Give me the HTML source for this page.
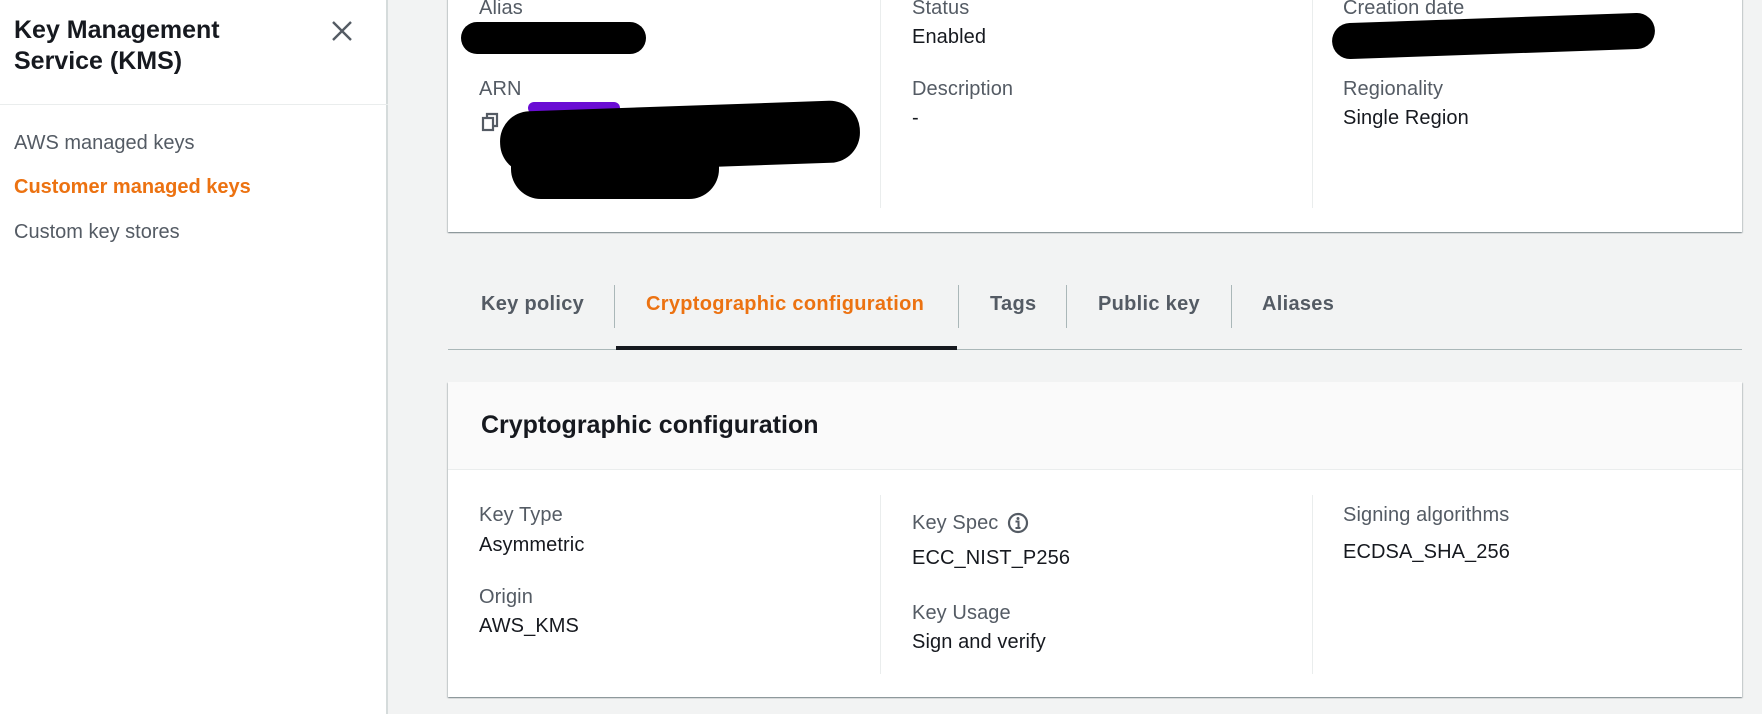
<!DOCTYPE html>
<html><head><meta charset="utf-8"><style>
*{margin:0;padding:0;box-sizing:border-box}
body{width:1762px;height:714px;overflow:hidden;background:#f2f3f3;font-family:"Liberation Sans",Arial,sans-serif;position:relative;color:#16191f}
.a{position:absolute;white-space:nowrap}
.side{position:absolute;left:0;top:0;width:388px;height:714px;background:#fff;border-right:2px solid #d5dbdb}
.lbl{color:#545b64;font-size:20px;letter-spacing:0.1px}
.val{color:#16191f;font-size:20px;letter-spacing:0.1px}
.card{position:absolute;background:#fff;box-shadow:0 1px 1px 0 rgba(0,28,36,.3),1px 1px 1px 0 rgba(0,28,36,.15),-1px 1px 1px 0 rgba(0,28,36,.15)}
.vs{position:absolute;width:1px;background:#eaeded}
.tab{position:absolute;top:293px;font-size:20px;font-weight:bold;color:#545b64;letter-spacing:0.3px}
.td{position:absolute;top:285px;width:1px;height:43px;background:#aab7b8}
.blob{position:absolute;background:#000;border-radius:30px}
</style></head><body>
<div class="side">
  <div class="a" style="left:14px;top:15px;font-size:25px;font-weight:bold;line-height:31px">Key Management<br>Service (KMS)</div>
  <svg class="a" style="left:331px;top:20px" width="22" height="22" viewBox="0 0 22 22"><path d="M2 2L20 20M20 2L2 20" stroke="#545b64" stroke-width="2.4"/></svg>
  <div class="a" style="left:0;top:104px;width:388px;height:1px;background:#eaeded"></div>
  <div class="a" style="left:14px;top:132px;font-size:20px;color:#545b64">AWS managed keys</div>
  <div class="a" style="left:14px;top:176px;font-size:20px;color:#ec7211;font-weight:bold">Customer managed keys</div>
  <div class="a" style="left:14px;top:221px;font-size:20px;color:#545b64">Custom key stores</div>
</div>

<div class="card" style="left:448px;top:-4px;width:1294px;height:236px"></div>
<div class="vs" style="left:880px;top:0;height:208px"></div>
<div class="vs" style="left:1312px;top:0;height:208px"></div>
<div class="a lbl" style="left:479px;top:-3px">Alias</div>
<div class="blob" style="left:461px;top:22px;width:185px;height:32px"></div>
<div class="a lbl" style="left:479px;top:78px">ARN</div>
<svg class="a" style="left:481px;top:112px" width="20" height="20" viewBox="0 0 20 20"><rect x="2" y="6" width="10" height="12" fill="none" stroke="#545b64" stroke-width="2.2"/><path d="M6 6V2h10v12h-4" fill="none" stroke="#545b64" stroke-width="2.2"/></svg>
<div class="a" style="left:528px;top:102px;width:92px;height:12px;background:#6a0dd4;border-radius:6px"></div>
<div class="blob" style="left:500px;top:106px;width:360px;height:62px;transform:rotate(-2deg)"></div>
<div class="blob" style="left:511px;top:135px;width:208px;height:64px"></div>
<div class="a lbl" style="left:912px;top:-3px">Status</div>
<div class="a val" style="left:912px;top:26px">Enabled</div>
<div class="a lbl" style="left:912px;top:78px">Description</div>
<div class="a val" style="left:912px;top:107px">-</div>
<div class="a lbl" style="left:1343px;top:-3px">Creation date</div>
<div class="blob" style="left:1332px;top:18px;width:323px;height:36px;transform:rotate(-2deg)"></div>
<div class="a lbl" style="left:1343px;top:78px">Regionality</div>
<div class="a val" style="left:1343px;top:107px">Single Region</div>

<div class="tab" style="left:481px">Key policy</div>
<div class="td" style="left:614px"></div>
<div class="tab" style="left:646px;color:#ec7211">Cryptographic configuration</div>
<div class="td" style="left:958px"></div>
<div class="tab" style="left:990px">Tags</div>
<div class="td" style="left:1066px"></div>
<div class="tab" style="left:1098px">Public key</div>
<div class="td" style="left:1231px"></div>
<div class="tab" style="left:1262px">Aliases</div>
<div class="a" style="left:448px;top:349px;width:1294px;height:1px;background:#aab7b8"></div>
<div class="a" style="left:616px;top:346px;width:341px;height:4px;background:#16191f"></div>

<div class="card" style="left:448px;top:382px;width:1294px;height:315px"></div>
<div class="a" style="left:448px;top:382px;width:1294px;height:88px;background:#fafafa;border-bottom:1px solid #eaeded"></div>
<div class="a" style="left:481px;top:411px;font-size:25px;font-weight:bold">Cryptographic configuration</div>
<div class="vs" style="left:880px;top:495px;height:179px"></div>
<div class="vs" style="left:1312px;top:495px;height:179px"></div>
<div class="a lbl" style="left:479px;top:504px">Key Type</div>
<div class="a val" style="left:479px;top:534px">Asymmetric</div>
<div class="a lbl" style="left:479px;top:586px">Origin</div>
<div class="a val" style="left:479px;top:615px">AWS_KMS</div>
<div class="a lbl" style="left:912px;top:512px">Key Spec</div>
<svg class="a" style="left:1007px;top:512px" width="22" height="22" viewBox="0 0 22 22"><circle cx="11" cy="11" r="9" fill="none" stroke="#545b64" stroke-width="2.2"/><circle cx="11" cy="6.5" r="1.5" fill="#545b64"/><path d="M8.5 9.5h3v6M8.5 16h5" stroke="#545b64" stroke-width="2" fill="none"/></svg>
<div class="a val" style="left:912px;top:547px">ECC_NIST_P256</div>
<div class="a lbl" style="left:912px;top:602px">Key Usage</div>
<div class="a val" style="left:912px;top:631px">Sign and verify</div>
<div class="a lbl" style="left:1343px;top:504px">Signing algorithms</div>
<div class="a val" style="left:1343px;top:541px">ECDSA_SHA_256</div>
</body></html>
